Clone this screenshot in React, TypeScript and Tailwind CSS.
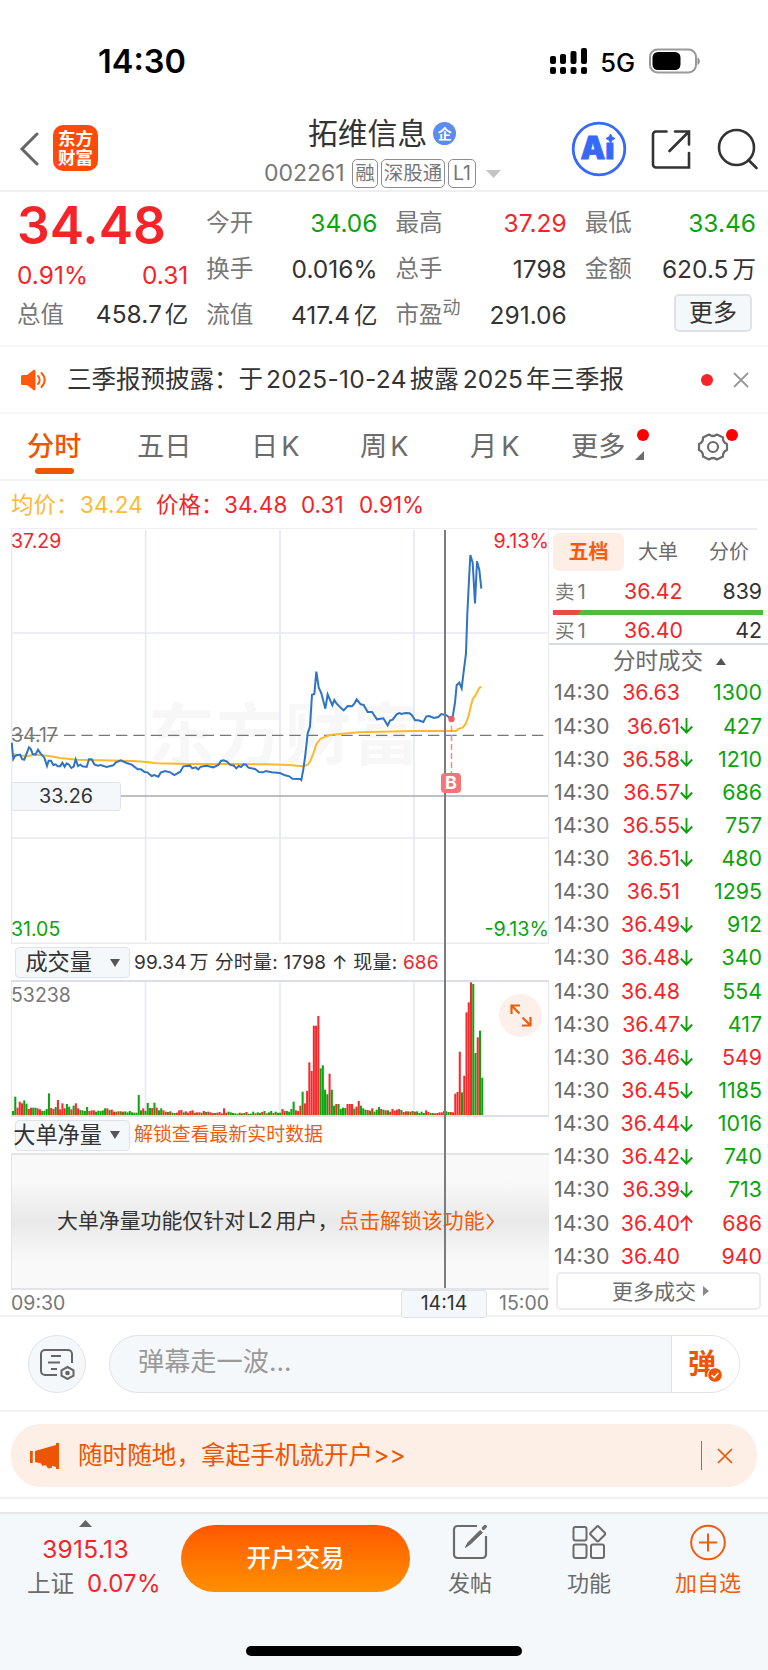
import { ReactNode } from "react";

const PRICE_LINE =
    "35,668 40,717 45,708 50,706 60,704 67,718 73,719 80,700 87,682 93,688 98,702 107,703 114,689 122,701 133,713 141,738 146,722 153,722 160,735 167,733 173,739 181,739 187,728 194,740 200,730 207,734 214,744 221,740 227,718 234,738 241,734 247,739 260,741 267,718 275,718 283,733 294,737 302,735 320,741 340,736 348,727 362,721 380,729 395,734 413,748 423,748 434,756 442,757 455,768 463,765 475,770 482,758 495,753 511,757 523,765 541,755 550,739 570,737 577,745 587,742 595,748 602,740 620,737 640,742 655,735 663,723 671,721 681,725 690,734 702,737 709,745 716,738 723,741 731,733 738,734 745,743 765,747 777,756 790,757 797,753 815,757 840,759 855,766 868,769 877,776 901,777 904,780 910,748 916,705 923,640 930,620 936,524 943,522 949,455 956,502 964,520 976,566 983,523 997,556 1003,540 1010,551 1024,565 1031,571 1043,558 1056,559 1063,551 1070,538 1082,553 1091,555 1103,576 1116,576 1131,598 1150,595 1163,616 1170,602 1178,599 1190,583 1198,579 1204,582 1217,579 1229,580 1237,587 1245,601 1255,601 1270,606 1279,589 1287,588 1302,594 1315,591 1324,582 1340,586 1348,593 1355,597 1359,585 1365,548 1370,495 1378,488 1385,505 1391,455 1398,400 1402,280 1407,180 1411,105 1418,128 1425,250 1431,124 1438,150 1444,206";

const AVG_LINE =
    "40,703 50,704 80,709 105,704 130,706 150,709 180,714 230,719 300,721 400,723 430,725 470,730 560,732 700,732 800,733 870,735 890,737 910,739 923,734 931,723 940,700 950,671 962,656 990,645 1020,642 1075,637 1140,635 1240,633 1368,633 1375,627 1388,623 1397,612 1405,590 1412,560 1418,538 1428,524 1437,505 1444,500";

// one entry per minute: colour letter + height
const VOLUME =
    "g12 g55 r22 r40 r35 g44 g34 r18 r22 g22 g22 r20 r17 g12 g13 g18 g65 r21 r18 g24 r45 r17 r35 r20 g33 g25 r17 g28 r35 r20 g15 g14 g12 g24 r12 r14 r14 g10 g13 g12 g14 g20 r20 g15 r16 r10 g10 r11 g11 r10 g11 g8 g12 g8 g7 g7 g60 g14 r20 g12 g36 g21 r21 g37 r22 g14 g20 r14 r10 g9 r11 g7 g6 r7 r14 r15 g8 r11 r7 r12 r14 g7 r8 r8 g7 r12 g9 r10 r8 r6 g6 r7 r9 r5 r20 r7 g10 g8 g6 g5 g4 r7 g5 g6 r9 g4 g4 g10 r5 g8 g6 r9 g12 r5 g8 g12 r6 g10 g7 g7 r18 r12 g12 g10 g18 g40 r14 r12 r28 g70 r35 r72 r158 r132 r268 r268 r297 g140 g149 g76 g62 r124 g76 g28 r33 g33 g18 g22 g21 r33 r33 r33 g19 r25 r42 g28 g20 g16 r15 g13 r20 g10 g16 g24 r18 g16 r14 g14 r10 r18 r13 r16 r18 g15 r9 r11 g11 r10 g12 r10 g11 g6 g10 g6 r14 r9 g6 g6 r5 r6 r8 r8 r12 g11 g9 r9 r8 r64 r69 r190 g68 r118 r308 r338 r398 g393 g186 r233 g253 g112".split(" ");

const trades = [
    ["36.63", "", "1300", "g"],
    ["36.61", "↓", "427", "g"],
    ["36.58", "↓", "1210", "g"],
    ["36.57", "↓", "686", "g"],
    ["36.55", "↓", "757", "g"],
    ["36.51", "↓", "480", "g"],
    ["36.51", "", "1295", "g"],
    ["36.49", "↓", "912", "g"],
    ["36.48", "↓", "340", "g"],
    ["36.48", "", "554", "g"],
    ["36.47", "↓", "417", "g"],
    ["36.46", "↓", "549", "r"],
    ["36.45", "↓", "1185", "g"],
    ["36.44", "↓", "1016", "g"],
    ["36.42", "↓", "740", "g"],
    ["36.39", "↓", "713", "g"],
    ["36.40", "↑", "686", "r"],
    ["36.40", "", "940", "r"],
];

const RED = "text-[#f52428]";
const GREEN = "text-[#0ba30b]";

const StatusBar = () => {
    return <div className="h-[100px] flex items-start pl-[98px] pr-[68px] pt-[45px]">
        <div className="text-[32.500px] leading-[33px] font-semibold text-black">14:30</div>
        <svg className="ml-auto mt-[3px]" width="38" height="26" viewBox="0 0 38 26">
            <rect x="0" y="8" width="6" height="8" rx="2" />
            <rect x="10" y="6" width="6" height="10" rx="2" />
            <rect x="20.500" y="3" width="6" height="13" rx="2" />
            <rect x="31" y="0" width="6" height="16" rx="2" />
            <rect x="0" y="19" width="6" height="7" rx="2" />
            <rect x="10" y="19" width="6" height="7" rx="2" />
            <rect x="20.500" y="19" width="6" height="7" rx="2" />
            <rect x="31" y="19" width="6" height="7" rx="2" />
        </svg>
        <div className="ml-[12px] mt-px text-[25.500px] leading-[34px] font-medium text-black">5G</div>
        <svg className="ml-[14px] mt-[3px]" width="51" height="26" viewBox="0 0 51 26">
            <rect x="1" y="1.500" width="46" height="23" rx="7.500" fill="none" stroke="#999" strokeWidth="2" />
            <rect x="3.500" y="4" width="28" height="18" rx="5.500" />
            <path d="M48.500 9.500c3 1 3 6.500 0 7.500z" fill="#8e8e8e" />
        </svg>
    </div>
}

const Tag = ({ children, width }: { children: ReactNode, width: string }) => {
    return <span className={`${width} h-[29px] flex items-center justify-center border-[1.5px] border-[#8d8d8d] rounded-[5px] text-[19.5px] leading-none whitespace-nowrap`}>{children}</span>
}

const Header = () => {
    return <div className="h-[92px] flex items-center border-b-2 border-[#efefef]">
        <svg className="ml-[19px] mt-[7px]" width="20" height="34" viewBox="0 0 20 34">
            <path d="M18 2L3 17l15 15" fill="none" stroke="#666" strokeWidth="3" strokeLinecap="round" />
        </svg>
        <div className="ml-[14px] mt-[6px] w-[45px] h-[46px] rounded-[10px] bg-[#ff4a0b] text-white font-bold text-[17.500px] leading-[19px] flex flex-col items-center justify-center">
            <span>东方</span>
            <span>财富</span>
        </div>
        <div className="ml-[166px] w-[240px] flex flex-col pt-[18px]">
            <div className="flex items-center pl-[44px] h-[34px] text-[29.800px] leading-none text-[#333]">
                拓维信息
                <span className="ml-[6px] w-[23px] h-[23px] rounded-full bg-[#5b8def] text-white text-[14px] font-bold flex items-center justify-center">企</span>
            </div>
            <div className="flex items-center h-[38px] mt-[4px] -mb-px text-[#777] leading-none">
                <span className="text-[23px] w-[88px]">002261</span>
                <span className="flex gap-[3px]">
                    <Tag width="w-[26px]">融</Tag>
                    <Tag width="w-[64px]">深股通</Tag>
                    <Tag width="w-[28px]">L1</Tag>
                </span>
                <svg className="ml-[10px]" width="15" height="8"><path d="M0 0h15l-7.500 8z" fill="#c4c4c4" /></svg>
            </div>
        </div>
        <svg className="ml-[67px] mt-[8px]" width="56" height="56" viewBox="0 0 56 56">
            <circle cx="28" cy="28" r="25.800" fill="none" stroke="#3568fb" strokeWidth="2.800" />
            <text x="9.500" y="38" fontSize="31" fontWeight="900" fontFamily="Inter, sans-serif" fill="#3568fb" stroke="#3568fb" strokeWidth=".8" textLength="34" lengthAdjust="spacingAndGlyphs">Ai</text>
            <rect x="33" y="10" width="12" height="11.500" fill="#fff" />
            <path d="M39.500 13l1.500 3 3 1.500-3 1.500-1.500 3-1.500-3-3-1.500 3-1.500z" fill="#3568fb" stroke="#3568fb" />
        </svg>
        <svg className="ml-[24px] mt-[8px]" width="40" height="40" viewBox="0 0 40 40" fill="none" stroke="#333" strokeWidth="2.600">
            <path d="M15.500 2.500H5a3 3 0 0 0-3 3v30a3 3 0 0 0 3 3h33V24M24 2.500h14V15.500M38 2.500L18.500 22" strokeLinecap="round" />
        </svg>
        <svg className="ml-[26px] mt-[8px]" width="42" height="42" viewBox="0 0 42 42" fill="none" stroke="#333" strokeWidth="2.600">
            <circle cx="19.500" cy="19.500" r="17.500" />
            <path d="M31.500 32l8 8" strokeLinecap="round" />
        </svg>
    </div>
}

const Stat = ({ label, value, color = "text-[#333]" }: { label: ReactNode, value: ReactNode, color?: string }) => {
    return <div className="h-[46px] flex items-center justify-between leading-none">
        <span className="text-[#777] text-[23.500px]">{label}</span>
        <span className={color}>{value}</span>
    </div>
}

const Quote = () => {
    return <div className="h-[155px] pt-[8px] pl-[17px] pr-[12px] grid grid-cols-4 gap-x-[18px] border-b-2 border-[#f6f6f6] text-[24.500px] leading-none whitespace-nowrap">
        <div className={RED}>
            <div className="h-[51px] flex items-center text-[51.500px] font-semibold">34.48</div>
            <div className="h-[48px] flex items-center justify-between">
                <span>0.91%</span>
                <span>0.31</span>
            </div>
            <div className="h-[31px] flex items-center justify-between text-[#333]">
                <span className="text-[#777] text-[23.500px]">总值</span>
                <span>458.7<span className="ml-[3px] text-[23.500px]">亿</span></span>
            </div>
        </div>
        <div>
            <Stat label="今开" value="34.06" color={GREEN} />
            <Stat label="换手" value="0.016%" />
            <Stat label="流值" value={<>417.4<span className="ml-[4px] text-[23.500px]">亿</span></>} />
        </div>
        <div>
            <Stat label="最高" value="37.29" color={RED} />
            <Stat label="总手" value="1798" />
            <Stat label={<>市盈<sup className="text-[18px] -top-[9px]">动</sup></>} value="291.06" />
        </div>
        <div>
            <Stat label="最低" value="33.46" color={GREEN} />
            <Stat label="金额" value={<>620.5<span className="ml-[4px] text-[23.500px]">万</span></>} />
            <div className="flex justify-end pr-[4px] pt-[2px]">
                <button className="w-[78px] h-[38px] border-2 border-[#dfe3e9] rounded-[5px] bg-[#f5f8fa] text-[#333] text-[24px]">更多</button>
            </div>
        </div>
    </div>
}

const Notice = () => {
    return <div className="h-[67px] flex items-center pl-[21px] pr-[19px] border-b-2 border-[#f6f6f6] leading-none">
        <svg width="26" height="22" viewBox="0 0 26 22">
            <path d="M0 7.500C0 6.500.8 6 1.800 6H6l6.500-5c1-.7 2 0 2 1v18c0 1-1 1.700-2 1L6 16H1.800C.8 16 0 15.500 0 14.500z" fill="#ff5a0c" />
            <path d="M17 7c2.200 2 2.200 6 0 8M20.500 4c4.200 4 4.200 10 0 14" fill="none" stroke="#ff5a0c" strokeWidth="2" strokeLinecap="round" />
        </svg>
        <div className="ml-[20px] text-[24.500px] text-[#333] whitespace-nowrap flex">
            <span>三季报预披露：于</span>
            <span className="ml-[3px] tracking-[0.3px]">2025-10-24</span>
            <span className="ml-[3px]">披露</span>
            <span className="ml-[4px]">2025</span>
            <span className="ml-[3px]">年三季报</span>
        </div>
        <span className="ml-auto w-[12px] h-[12px] rounded-full bg-[#f52428]"></span>
        <svg className="ml-[20px]" width="16" height="16"><path d="M1 1l14 14M15 1L1 15" stroke="#999" strokeWidth="1.800" /></svg>
    </div>
}

const Tabs = () => {
    return <div className="h-[67px] flex items-center border-b-2 border-[#f3f3f3] text-[27.200px] leading-none text-[#6b6b6b] whitespace-nowrap">
        <div className="relative ml-[27px] w-[110px] text-[#ee5500] font-medium">
            分时
            <span className="absolute left-[8px] top-[35px] w-[39px] h-[6px] rounded-full bg-[#ee5500]"></span>
        </div>
        <div className="w-[114px]">五日</div>
        <div className="w-[109px]">日<span className="ml-[3px]">K</span></div>
        <div className="w-[110px]">周<span className="ml-[3px]">K</span></div>
        <div className="w-[101px]">月<span className="ml-[4px]">K</span></div>
        <div className="relative w-[126px]">
            更多
            <svg className="absolute left-[64px] top-[18px]" width="9" height="9"><path d="M9 0v9H0z" fill="#6b6b6b" /></svg>
            <span className="absolute left-[66px] -top-[4px] w-[12px] h-[12px] rounded-full bg-[#ff0000]"></span>
        </div>
        <div className="relative">
            <svg width="32" height="30" viewBox="0 0 32 30" fill="none" stroke="#6b6b6b" strokeWidth="2.200" strokeLinejoin="round">
                <path d="M12 2.500Q16 5.500 20 2.500L26 5.500Q25.500 10 30 12V18Q25.500 20 26 24.500L20 27.500Q16 24.500 12 27.500L6 24.500Q6.500 20 2 18V12Q6.500 10 6 5.500Z" />
                <circle cx="16" cy="15" r="5" />
            </svg>
            <span className="absolute left-[29px] -top-[3px] w-[12px] h-[12px] rounded-full bg-[#ff0000]"></span>
        </div>
    </div>
}

const PriceInfo = () => {
    return <div className="h-[47px] pt-px flex items-center pl-[11px] text-[22.500px] leading-none text-[#f52428] whitespace-nowrap">
        <span className="w-[69px] text-[#fcb93a]">均价：</span>
        <span className="w-[76px] text-[#fcb93a] tracking-[0.200px]">34.24</span>
        <span className="w-[68px]">价格：</span>
        <span className="w-[77px] tracking-[0.200px]">34.48</span>
        <span className="w-[58px]">0.31</span>
        <span>0.91%</span>
    </div>
}

const PriceChart = () => {
    return <div className="relative h-[417px]">
        <svg className="absolute inset-0" width="538" height="416" viewBox="33 24 1614 1248" fontFamily="Inter, 'Noto Sans CJK SC', sans-serif">
            <text x="444" y="718" fontSize="200" fontWeight="700" fill="#f7f7f7" textLength="815">东方财富</text>
            <g stroke="#e6e9f1" strokeWidth="5" fill="none">
                <path d="M437 30V1262M840 30V1262M1242 30V1262M36 339H1644M36 954H1644" />
                <path d="M35 1272V24H1646V1272M33 1270H1647" stroke="#ececf0" />
            </g>
            <path d="M36 646H1644" stroke="#777" strokeWidth="4" strokeDasharray="34 18" />
            <path d="M362 828H1644" stroke="#aaa" strokeWidth="4" />
            <polyline points={AVG_LINE} fill="none" stroke="#fdb82e" strokeWidth="6" strokeLinejoin="round" />
            <polyline points={PRICE_LINE} fill="none" stroke="#2f74c0" strokeWidth="6" />
        </svg>
        <span className="absolute left-0 top-[3px] text-[19.500px] text-[#f52428] leading-[20px]">37.29</span>
        <span className="absolute right-0 top-[3px] text-[19.800px] text-[#f52428] leading-[20px]">9.13%</span>
        <span className="absolute left-0 top-[197px] text-[19.500px] text-[#777] leading-[20px]">34.17</span>
        <span className="absolute left-0 top-[391px] text-[19.500px] text-[#0ba30b] leading-[20px]">31.05</span>
        <span className="absolute right-0 top-[391px] text-[19.800px] text-[#0ba30b] leading-[20px]">-9.13%</span>
        <span className="absolute left-0 top-[254px] w-[110px] h-[29px] border-[1.5px] border-[#dfe3e9] rounded-[3px] bg-[#f5f8fa] flex items-center justify-center text-[19.800px] text-[#333]">33.26</span>
    </div>
}

const Selector = ({ children }: { children: ReactNode }) => {
    return <span className="w-[115px] h-[31px] border-[1.5px] border-[#dfe3e9] rounded-[4px] bg-[#f5f8fa] flex items-center justify-end pr-[9px] text-[22.200px] text-[#333] whitespace-nowrap">
        {children}
        <svg className="shrink-0" width="10" height="8"><path d="M0 0h10L5 8z" fill="#555" /></svg>
    </span>
}

const VolumeChart = () => {
    return <div className="relative h-[135px] border-t-2 border-[#dcdfe7]">
        <svg className="block" width="538" height="133" viewBox="0 0 538 133">
            <path d="M134.500 0V133M269 0V133M403 0V133" stroke="#e6e9f1" strokeWidth="1.600" />
            <path d="M.5 0V133M537.500 0V133" stroke="#e6e9f1" />
            {VOLUME.map((bar, i) => {
                const height = Number(bar.slice(1)) / 3;
                return <rect key={i} x={1 + i * 2.245} y={133 - height} width="2.050" height={height} fill={bar[0] === "r" ? "#f8292b" : "#0fa30f"} />
            })}
        </svg>
        <span className="absolute left-0 top-[3px] text-[19.500px] leading-[20px] text-[#777]">53238</span>
        <div className="absolute left-[488px] top-[12px] w-[43px] h-[43px] rounded-full bg-[#fdf0ea] flex items-center justify-center">
            <svg width="22" height="23" viewBox="0 0 22 23" fill="none" stroke="#ee5d0e" strokeWidth="2.200">
                <path d="M1.500 10V1.500H10M2 2l7.500 7.500M20.500 13v8.500H12M20 21l-7.500-7.500" />
            </svg>
        </div>
    </div>
}

const Chart = () => {
    return <div className="relative w-[538px] ml-[11px]">
        <PriceChart />
        <div className="h-[35px] flex items-center pl-[4px] text-[19px] leading-none text-[#333] whitespace-nowrap">
            <Selector><span className="mr-[18px]">成交量</span></Selector>
            <span className="ml-[4px] tracking-[0.1px]">99.34<span className="ml-[3px]">万</span></span>
            <span className="ml-[6px] tracking-[0.2px]">分时量: 1798 ↑ 现量: <span className="text-[#f52428]">686</span></span>
        </div>
        <VolumeChart />
        <div className="h-[38px] flex items-center pl-[4px] border-t-2 border-[#dcdfe7] leading-none whitespace-nowrap">
            <Selector><span className="mr-[8px] -ml-[2px]">大单净量</span></Selector>
            <span className="ml-[4px] text-[18.900px] text-[#ee5d0e]">解锁查看最新实时数据</span>
        </div>
        <div className="h-[137px] border-t-2 border-b-2 border-l border-[#e2e4ea] bg-linear-to-b from-[#f9f9f9] from-20% via-[#e9e9e9] to-[#f9f9f9] to-80% flex items-center pl-[45px] text-[20.900px] leading-none text-[#333] whitespace-nowrap">
            <span>大单净量功能仅针对</span>
            <span className="ml-[3px]">L2</span>
            <span className="ml-[3px]">用户，</span>
            <span className="text-[#ee5d0e]">点击解锁该功能</span>
            <svg className="ml-px" width="8" height="17"><path d="M1 1l6 7.500L1 16" fill="none" stroke="#ee5d0e" strokeWidth="1.800" /></svg>
        </div>
        <div className="h-[27px] flex items-center text-[19.500px] leading-none text-[#777]">
            <span>09:30</span>
            <span className="ml-auto w-[86px] h-[28px] border-[1.5px] border-[#dfe3e9] rounded-[3px] bg-[#f5f8fa] flex items-center justify-center text-[#333]">14:14</span>
            <span className="ml-[12px]">15:00</span>
        </div>
        {/* crosshair */}
        <div className="absolute left-[433px] top-[2px] w-[2px] h-[758px] bg-[#7c7c7c]"></div>
        <svg className="absolute left-[423px] top-[184px]" width="24" height="84" viewBox="0 0 24 84">
            <circle cx="17.500" cy="7" r="3.200" fill="#ef5b5e" />
            <path d="M17.500 14V62" stroke="#f58a8c" strokeWidth="1.500" strokeDasharray="6 3" />
        </svg>
        <span className="absolute left-[430px] top-[245px] w-[20px] h-[20px] rounded-[4px] bg-[#f47477] text-white text-[18px] font-bold leading-none flex items-center justify-center">B</span>
    </div>
}

const Depth = ({ side, price, volume }: { side: string, price: string, volume: string }) => {
    return <div className="flex items-center h-[30px] text-[21.300px]">
        <span className="w-[71px] pl-[2px] text-[#777] text-[19.500px]">{side}<span className="ml-[3px] text-[20.500px]">1</span></span>
        <span className={RED}>{price}</span>
        <span className="ml-auto text-[#333]">{volume}</span>
    </div>
}

const OrderBook = () => {
    return <div className="w-[219px] pl-[4px] leading-none whitespace-nowrap">
        <div className="h-[2px] -ml-[4px] w-[208px] bg-[#ececf0]"></div>
        <div className="flex items-center mt-[3px] text-[20px] text-[#6b6b6b]">
            <span className="w-[71px] h-[38px] rounded-[6px] bg-[#feeee6] text-[#ff5a0c] font-bold flex items-center justify-center">五档</span>
            <span className="ml-[14px]">大单</span>
            <span className="ml-[31px]">分价</span>
        </div>
        <div className="mt-[6px] pr-[6px]"><Depth side="卖" price="36.42" volume="839" /></div>
        <div className="w-[210px] h-[5px] mt-[3px] flex bg-[#55b83f]">
            <span className="w-[28px] bg-[#e94b4b] [clip-path:polygon(0_0,100%_0,88%_100%,0_100%)]"></span>
        </div>
        <div className="mt-[1px] pr-[6px]"><Depth side="买" price="36.40" volume="42" /></div>
        <div className="h-[33.500px] -ml-[4px] pl-[64px] pt-px -mt-[3px] border-t-2 border-[#d9dce4] flex items-center text-[22.500px] text-[#6b6b6b]">
            分时成交
            <svg className="ml-[13px]" width="10" height="7"><path d="M0 7h10L5 0z" fill="#555" /></svg>
        </div>
        {trades.map((trade, i) => {
            const [price, arrow, volume, color] = trade;
            return <div key={i} className="h-[33.150px] flex items-center text-[21.400px]">
                <span className="w-[56px] pl-[1px] text-[#6b6b6b]">14:30</span>
                <span className={`w-[71px] text-right ${RED}`}>{price}</span>
                <span className="w-[17px]">
                    {arrow && <svg className={arrow === "↑" ? "rotate-180" : ""} width="13" height="16" viewBox="0 0 13 16">
                        <path d="M6.500 0V14.500M.8 8.500L6.500 14.500l5.700-6" fill="none" stroke={arrow === "↑" ? "#f52428" : "#0ba30b"} strokeWidth="1.900" />
                    </svg>}
                </span>
                <span className={`ml-auto pr-[6px] ${color === "r" ? RED : GREEN}`}>{volume}</span>
            </div>
        })}
        <div className="ml-[3px] -mt-px w-[205px] h-[38px] border-2 border-[#ececf0] rounded-[5px] flex items-center justify-center pl-[4px] text-[21px] text-[#6b6b6b]">
            更多成交
            <svg className="ml-[7px]" width="6" height="10"><path d="M0 0v10l6-5z" fill="#888" /></svg>
        </div>
    </div>
}

const CommentBar = () => {
    return <div className="h-[97px] flex items-center pl-[28px] border-t-2 border-b-2 border-[#f3f3f3]">
        <div className="w-[58px] h-[58px] rounded-full border-[1.5px] border-[#dfe3e9] bg-[#f5f8fa] flex items-center justify-center">
            <svg width="36" height="32" viewBox="0 0 36 32" fill="none" stroke="#666" strokeWidth="2">
                <path d="M18 27H6a4 4 0 0 1-4-4V6a4 4 0 0 1 4-4h23a4 4 0 0 1 4 4v9M12 8h10M9 14.500h12M12 21h6" />
                <path d="M28.500 19l6 3.300v5.400l-6 3.300-6-3.300v-5.400z" />
                <circle cx="28.500" cy="25" r="1.300" fill="#666" />
            </svg>
        </div>
        <div className="ml-[23px] w-[631px] h-[58px] rounded-full border-[1.5px] border-[#dfe3e9] bg-[#f5f8fa] overflow-hidden flex">
            <div className="w-[561px] pl-[28px] pb-[3px] flex items-center text-[26.200px] leading-none text-[#999]">弹幕走一波...</div>
            <div className="relative flex-1 bg-white border-l-[1.5px] border-[#dfe3e9] flex items-center pl-[16px] text-[28px] leading-none font-bold text-[#ee5500]">
                弹
                <svg className="absolute left-[35px] top-[31px]" width="16" height="16" viewBox="0 0 16 16">
                    <circle cx="8" cy="8" r="7.300" fill="#ee5500" stroke="#fff" />
                    <path d="M4.500 8l2.600 2.600 4.300-4.600" fill="none" stroke="#fff" strokeWidth="1.600" />
                </svg>
            </div>
        </div>
    </div>
}

const Promo = () => {
    return <div className="h-[87px] pt-[12px] px-[11px] border-b-2 border-[#f0f0f4]">
        <div className="h-[63px] rounded-[30px] bg-[#fdeee6] flex items-center pl-[19px] pr-[24px] text-[#ee5500]">
            <svg width="30" height="26" viewBox="0 0 30 26" fill="#ee5500">
                <path d="M0 8h2.800v12H0zM5 8L26 2V0h3v26h-3v-2l-4-1.200v2l-4 .6-2-3.200-4 .5-.8-2.200L5 19z" />
            </svg>
            <span className="ml-[18px] text-[24.600px] leading-none">随时随地，拿起手机就开户&gt;&gt;</span>
            <span className="ml-auto w-[1.500px] h-[29px] bg-[#ee5500]"></span>
            <svg className="ml-[15px]" width="16" height="16"><path d="M1 1l14 14M15 1L1 15" stroke="#ee5500" strokeWidth="1.700" /></svg>
        </div>
    </div>
}

const NavItem = ({ label, icon, className }: { label: string, icon: ReactNode, className: string }) => {
    return <div className={`${className} flex flex-col items-center pt-[10px] text-[22px] leading-none whitespace-nowrap`}>
        <div className="h-[37px]">{icon}</div>
        <span className="mt-[11px]">{label}</span>
    </div>
}

const BottomNav = () => {
    return <div className="mt-[13px] h-[158px] border-t-2 border-[#e6e8ec] bg-[#f5f8fa]">
        <div className="flex h-[132px] text-[#6b6b6b]">
            <div className="ml-[27px] w-[133px] flex flex-col pt-[6px] leading-none">
                <div className="w-[117px] flex flex-col items-center">
                    <svg width="13" height="7"><path d="M0 7h13L6.500 0z" fill="#666" /></svg>
                    <span className={`mt-[10px] text-[24.500px] tracking-[0.3px] ${RED}`}>3915.13</span>
                </div>
                <div className="mt-[10px] flex gap-[13px] text-[24px] whitespace-nowrap">
                    <span className="text-[23.500px]">上证</span>
                    <span className={`tracking-[0.2px] ${RED}`}>0.07%</span>
                </div>
            </div>
            <button className="ml-[21px] mt-[11px] w-[229px] h-[67px] rounded-[34px] bg-linear-to-b from-[#ff5600] to-[#ff8f00] text-white text-[24.500px] font-medium leading-none">开户交易</button>
            <NavItem className="ml-[30px] w-[60px]" label="发帖" icon={
                <svg width="36" height="36" viewBox="0 0 36 36" fill="none" stroke="#6b6b6b" strokeWidth="2.200">
                    <path d="M25 2H5.500A3.500 3.500 0 0 0 2 5.500v25A3.500 3.500 0 0 0 5.500 34h25a3.500 3.500 0 0 0 3.500-3.500V12" />
                    <path d="M13.500 23.500l2.500-5L28 6.500l2.500 2L18.500 20z" fill="#6b6b6b" strokeWidth="1" />
                    <path d="M31.500 4.300l1.700-1.700" strokeWidth="3.500" strokeLinecap="round" />
                </svg>
            } />
            <NavItem className="ml-[59px] w-[60px]" label="功能" icon={
                <svg width="34" height="36" viewBox="0 0 34 36" fill="none" stroke="#6b6b6b" strokeWidth="2">
                    <rect x="1.500" y="3" width="13" height="13.500" rx="2" />
                    <rect x="1.500" y="20.500" width="13" height="13.500" rx="2" />
                    <rect x="19" y="20.500" width="13" height="13.500" rx="2" />
                    <rect x="20" y="4" width="11.500" height="11.500" rx="1.500" transform="rotate(45 25.750 9.750)" />
                </svg>
            } />
            <div className="text-[#ee5d0e]">
                <NavItem className="ml-[49px] w-[80px]" label="加自选" icon={
                    <svg width="36" height="37" viewBox="0 0 36 37" fill="none" stroke="#ee5d0e" strokeWidth="2">
                        <circle cx="18" cy="18.500" r="16.800" />
                        <path d="M18 9.500v18M9 18.500h18" />
                    </svg>
                } />
            </div>
        </div>
        <div className="mx-auto w-[276px] h-[10px] rounded-full bg-black"></div>
    </div>
}

export default function App() {
    return <div className="w-[768px] h-[1670px] bg-white overflow-hidden font-[Inter,'Noto_Sans_CJK_SC',sans-serif]">
        <StatusBar />
        <Header />
        <Quote />
        <Notice />
        <Tabs />
        <PriceInfo />
        <div className="h-[787px] flex">
            <Chart />
            <OrderBook />
        </div>
        <CommentBar />
        <Promo />
        <BottomNav />
    </div>
}
